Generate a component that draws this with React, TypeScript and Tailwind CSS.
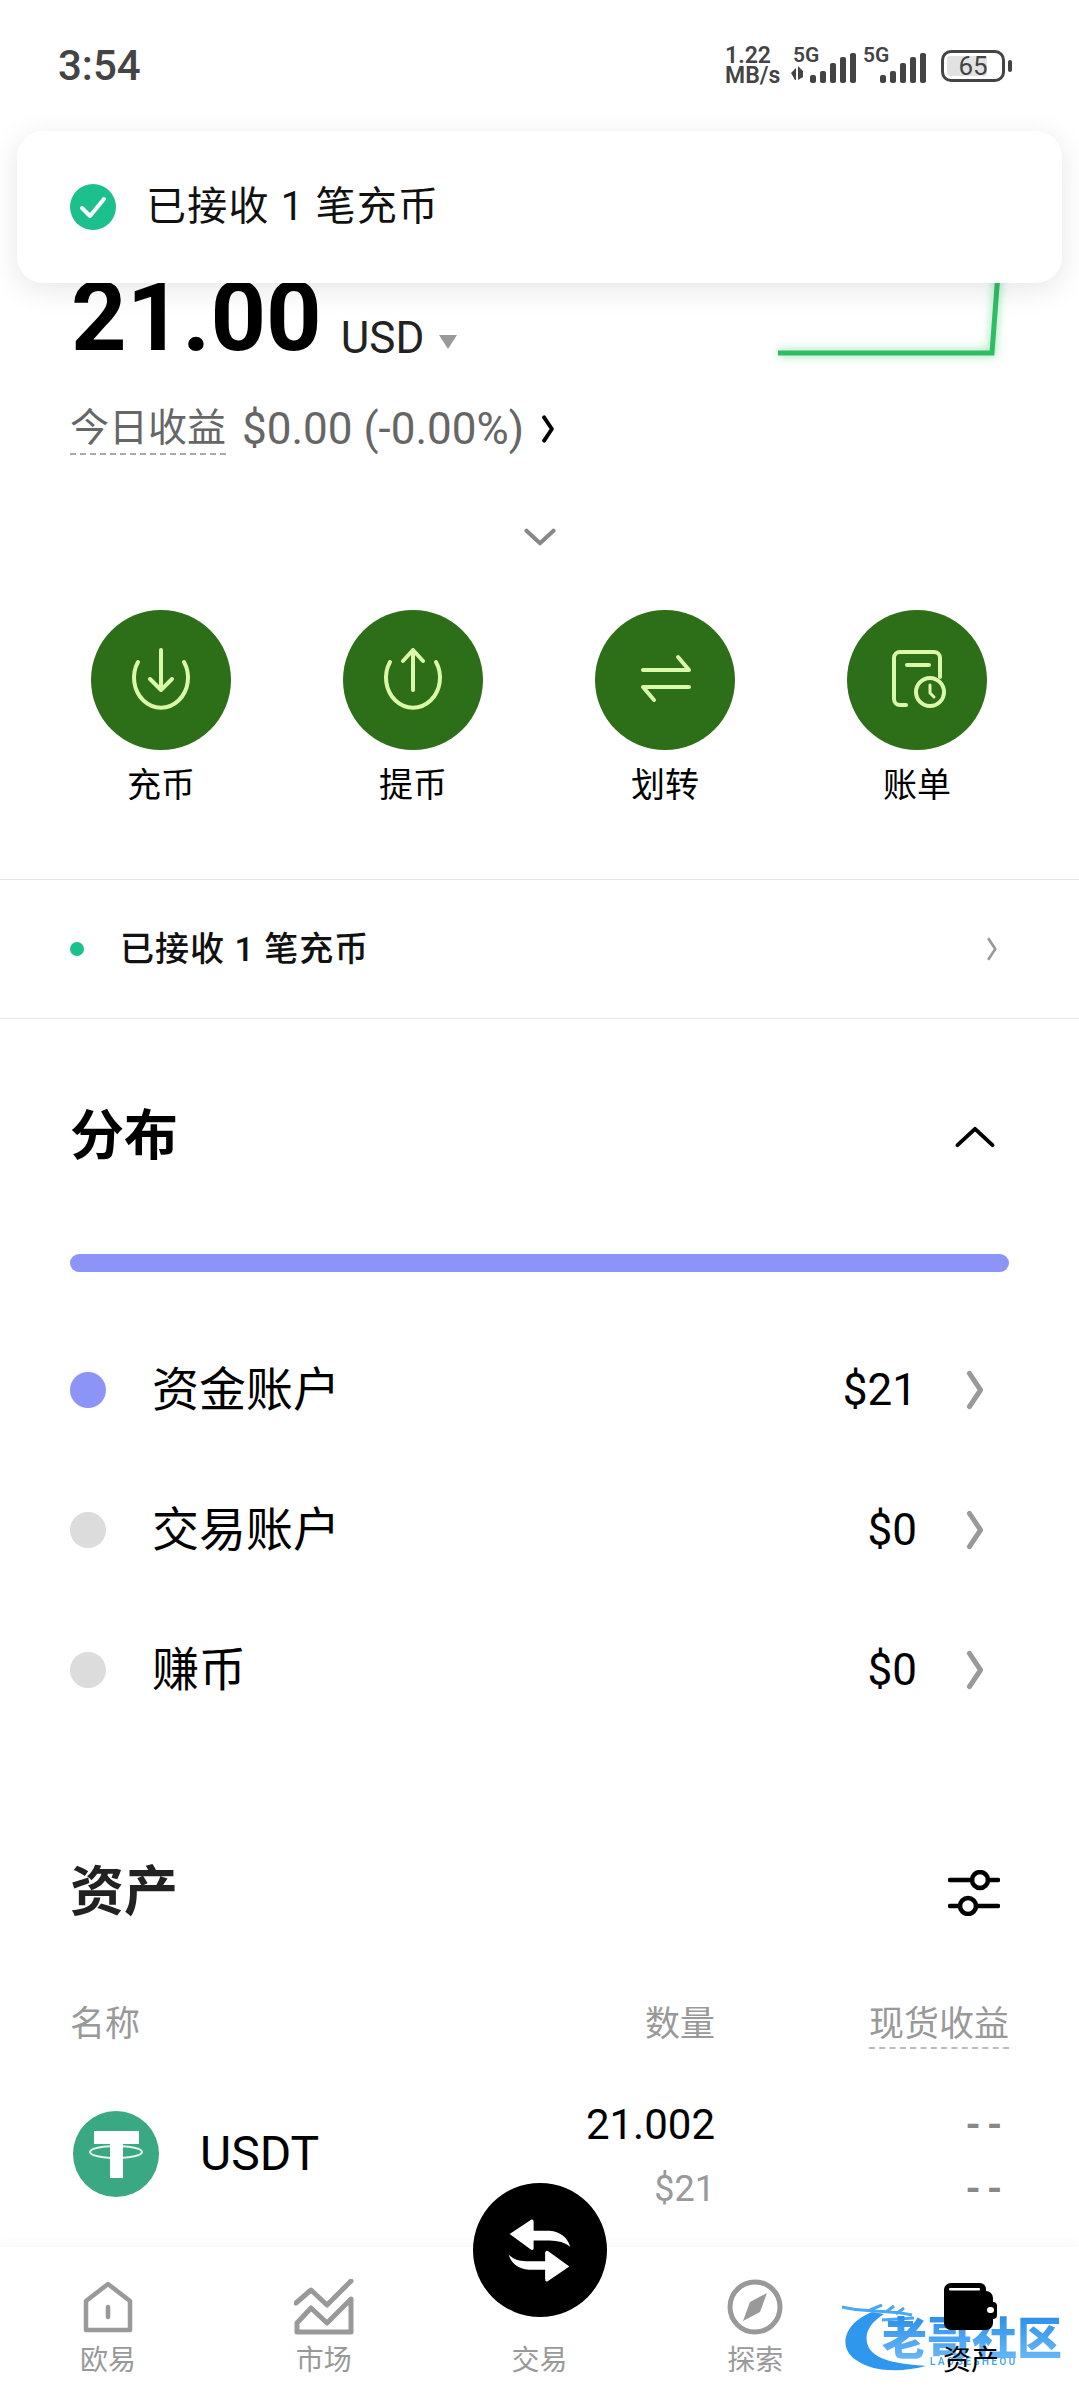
import type { ReactNode } from "react";

/* ------------------------------------------------------------------ */
/*  Icons                                                              */
/* ------------------------------------------------------------------ */

function Chevron({ className, dir = "right", weight = 4 }: { className?: string; dir?: "right" | "down" | "up"; weight?: number }) {
  const d = dir === "right" ? "M5 3l10 15-10 15" : dir === "down" ? "M3 3l15 14 15-14" : "M3 17l15-14 15 14";
  const box = dir === "right" ? "0 0 20 36" : "0 0 36 20";
  return (
    <svg viewBox={box} fill="none" stroke="currentColor" strokeWidth={weight} strokeLinecap="round" strokeLinejoin="round" className={className}>
      <path d={d} />
    </svg>
  );
}

function ActionIcon({ children }: { children: ReactNode }) {
  return (
    <svg width="64" height="64" viewBox="0 0 64 64" fill="none" stroke="#dcf9a9" strokeWidth="4" strokeLinecap="round" strokeLinejoin="round">
      {children}
    </svg>
  );
}

const actions: { label: string; icon: ReactNode }[] = [
  {
    label: "充币",
    icon: (
      <>
        <path d="M9 14A27 30 0 1 0 55 14" />
        <path d="M32 2V42M21 31L32 42L43 31" />
      </>
    ),
  },
  {
    label: "提币",
    icon: (
      <>
        <path d="M9 14A27 30 0 1 0 55 14" />
        <path d="M32 42V2M22 13L32 2L42 13" />
      </>
    ),
  },
  {
    label: "划转",
    icon: (
      <>
        <path d="M10 22H56L45 9" />
        <path d="M56 39H10L21 52" />
      </>
    ),
  },
  {
    label: "账单",
    icon: (
      <>
        <path d="M21 57H15a6 6 0 0 1-6-6V10a6 6 0 0 1 6-6H49a6 6 0 0 1 6 6V29" />
        <path d="M22 17H44" />
        <circle cx="45" cy="44" r="14" />
        <path d="M45 37V45L49 49" strokeWidth="3" />
      </>
    ),
  },
];

const barHeights = [8, 12, 20, 26, 30];

function SignalBars({ start, activity }: { start: number; activity?: boolean }) {
  return (
    <svg width="70" height="32" viewBox="0 0 70 32" fill="#444">
      {activity && <path d="M1 21l5-5v12l-1 0zM8 14l5 5v6l-5 3z" />}
      {barHeights.map((h, i) => (
        <rect key={i} x={start + i * 10} y={31 - h} width="6" height={h} rx="2" />
      ))}
    </svg>
  );
}

function HomeIcon() {
  return (
    <svg width="50" height="52" viewBox="0 0 50 52" fill="none" stroke="#999" strokeWidth="4.5" strokeLinejoin="round">
      <path d="M3 49V20L25 3L47 20V49Z" />
      <path d="M25 26V36" strokeLinecap="round" />
    </svg>
  );
}

function MarketIcon() {
  return (
    <svg width="60" height="56" viewBox="0 0 60 56" fill="none" stroke="#999" strokeWidth="5" strokeLinecap="round" strokeLinejoin="round">
      <path d="M2 24L17 11L33 26L57 2" />
      <path d="M57 20L33 44L17 29L3 44V53H57Z" />
    </svg>
  );
}

function CompassIcon() {
  return (
    <svg width="56" height="56" viewBox="0 0 56 56" fill="none">
      <circle cx="28" cy="28" r="25" stroke="#999" strokeWidth="5" />
      <path d="M40 14L33 33L16 42L23 23Z" fill="#999" />
    </svg>
  );
}

function WalletIcon() {
  return (
    <svg width="56" height="50" viewBox="0 0 56 50">
      <path d="M1 8a7 7 0 0 1 7-7H37a6 6 0 0 1 6 6V9H43a7 7 0 0 1 7 7V20a4 4 0 0 1 4 4V33a4 4 0 0 1-4 4V41a7 7 0 0 1-7 7H8a7 7 0 0 1-7-7Z" fill="#000" />
      <rect x="6" y="6" width="31" height="2.5" rx="1" fill="#fff" />
      <rect x="44" y="25" width="7" height="6" rx="3" fill="#fff" />
    </svg>
  );
}

function SwapIcon() {
  return (
    <svg width="140" height="140" viewBox="0 0 420 420" fill="#fff">
      <path d="M115 160L182 115Q190 112 190 122V150H240Q290 155 305 200Q280 180 240 180H190V205Q188 213 180 208Z" />
      <path d="M302 262L234 308Q226 311 226 300V272H175Q125 268 112 225Q135 248 175 245H226V218Q228 210 236 214Z" />
    </svg>
  );
}

function TetherLogo() {
  return (
    <svg width="86" height="86" viewBox="0 0 86 86">
      <circle cx="43" cy="43" r="43" fill="#3aa883" />
      <path d="M21 20H66V33H50V67H37V33H21Z" fill="#fff" />
      <ellipse cx="43" cy="41" rx="26" ry="6" fill="none" stroke="#fff" strokeWidth="2" opacity="0.85" />
    </svg>
  );
}

/* ------------------------------------------------------------------ */
/*  Data                                                               */
/* ------------------------------------------------------------------ */

const distribution = [
  { name: "资金账户", value: "$21", dot: "bg-[#8d94f8]" },
  { name: "交易账户", value: "$0", dot: "bg-[#dcdcdc]" },
  { name: "赚币", value: "$0", dot: "bg-[#dcdcdc]" },
];

const navItems: { label: string; icon: ReactNode | null; active?: boolean }[] = [
  { label: "欧易", icon: <HomeIcon /> },
  { label: "市场", icon: <MarketIcon /> },
  { label: "交易", icon: null },
  { label: "探索", icon: <CompassIcon /> },
  { label: "资产", icon: <WalletIcon />, active: true },
];

/* ------------------------------------------------------------------ */
/*  Sections                                                           */
/* ------------------------------------------------------------------ */

function StatusBar() {
  return (
    <div className="flex h-[130px] items-center justify-between pl-[58px] pr-[67px] pt-[1px] text-[#444]">
      <span className="text-[42px] font-medium leading-none">3:54</span>
      <div className="flex items-center">
        <div className="flex w-[65px] flex-col text-[23px] font-semibold leading-[20px]">
          <span>1.22</span>
          <span>MB/s</span>
        </div>
        <div className="relative h-[36px] w-[73px]">
          <span className="absolute -top-[3px] left-[3px] text-[21px] font-semibold leading-none">5G</span>
          <div className="absolute bottom-0 left-0">
            <SignalBars start={20} activity />
          </div>
        </div>
        <div className="relative h-[36px] w-[78px]">
          <span className="absolute -top-[3px] left-0 text-[21px] font-semibold leading-none">5G</span>
          <div className="absolute bottom-0 left-0">
            <SignalBars start={17} />
          </div>
        </div>
        <div className="flex items-center">
          <div className="relative flex h-[32px] w-[64px] items-center justify-center rounded-[10px] border-[3px] border-[#444] text-[26px] leading-none">
            <div className="absolute inset-y-[3px] left-[3px] w-[40px] rounded-[3px] bg-[#e2e2e2]" />
            <span className="relative">65</span>
          </div>
          <div className="ml-[3px] h-[12px] w-[4px] rounded-full bg-[#444]" />
        </div>
      </div>
    </div>
  );
}

function Balance() {
  return (
    <>
      <div className="mt-[137px] flex h-[100px] items-end justify-between pl-[71px] pr-[73px]">
        <div className="flex items-baseline">
          <span className="text-[97px] font-bold leading-[100px] text-black">21.00</span>
          <span className="ml-[19px] translate-y-[3px] text-[44px] leading-none text-[#222]">USD</span>
          <svg width="20" height="16" viewBox="0 0 20 16" className="ml-[14px]" fill="#9a9a9a">
            <path d="M1 1H19L10 15Z" />
          </svg>
        </div>
        <svg width="230" height="90" viewBox="0 0 230 90" fill="none" className="mb-[8px] drop-shadow-[0_0_5px_rgba(34,197,94,0.6)]">
          <path d="M2 84H216L222 4" stroke="#2fbd63" strokeWidth="5" />
        </svg>
      </div>
      <div className="mt-[32px] flex h-[60px] items-center pl-[70px] text-[#666]">
        <span className="border-b-2 border-dashed border-[#aaa] text-[39px] leading-[50px]">今日收益</span>
        <span className="ml-[16px] text-[44px] leading-[50px]">$0.00 (-0.00%)</span>
        <Chevron weight={5} className="ml-[16px] h-[28px] w-[16px] text-black" />
      </div>
      <div className="mt-[63px] flex h-[30px] items-center justify-center">
        <Chevron dir="down" weight={4.5} className="h-[18px] w-[34px] text-[#888]" />
      </div>
    </>
  );
}

function Actions() {
  return (
    <div className="mt-[58px] grid grid-cols-4 gap-x-[112px] pl-[91px] pr-[92px]">
      {actions.map((a) => (
        <div key={a.label} className="flex flex-col items-center">
          <div className="flex h-[140px] w-[140px] items-center justify-center rounded-full bg-[#2d6e18]">
            <ActionIcon>{a.icon}</ActionIcon>
          </div>
          <span className="mt-[12px] text-[34px] leading-[46px] text-black">{a.label}</span>
        </div>
      ))}
    </div>
  );
}

function NoticeRow() {
  return (
    <div className="mt-[71px] flex h-[140px] items-center border-y border-[#e6e6e6] pl-[70px] pr-[80px]">
      <div className="h-[14px] w-[14px] rounded-full bg-[#1cc08c]" />
      <span className="ml-[36px] text-[34px] font-medium tracking-[1px] text-[#111]">已接收 1 笔充币</span>
      <Chevron className="ml-auto h-[24px] w-[14px] text-[#999]" />
    </div>
  );
}

function Distribution() {
  return (
    <section className="px-[70px]">
      <div className="mt-[88px] flex h-[60px] items-center justify-between">
        <h2 className="text-[54px] font-bold leading-none text-black">分布</h2>
        <Chevron dir="up" weight={3.4} className="mr-[13px] h-[24px] w-[42px] text-black" />
      </div>
      <div className="mt-[87px] h-[18px] w-[939px] rounded-full bg-[#8d94f8]" />
      <div className="mt-[48px]">
        {distribution.map((row) => (
          <div key={row.name} className="flex h-[140px] items-center">
            <div className={`h-[36px] w-[36px] rounded-full ${row.dot}`} />
            <span className="ml-[46px] text-[47px] text-black">{row.name}</span>
            <span className="ml-auto text-[44px] text-black">{row.value}</span>
            <Chevron weight={4.5} className="ml-[46px] mr-[22px] h-[40px] w-[24px] text-[#999]" />
          </div>
        ))}
      </div>
    </section>
  );
}

function Assets() {
  return (
    <section className="px-[70px]">
      <div className="mt-[123px] flex h-[60px] items-center justify-between">
        <h2 className="text-[54px] font-bold leading-none text-[#222]">资产</h2>
        <svg width="52" height="46" viewBox="0 0 52 46" fill="none" stroke="#000" strokeWidth="4.5" strokeLinecap="round" className="mr-[9px]">
          <path d="M2 10H24M40 10H50M2 36H12M28 36H50" />
          <circle cx="32" cy="10" r="8" />
          <circle cx="20" cy="36" r="8" />
        </svg>
      </div>
      <div className="mt-[80px] flex h-[46px] items-start text-[35px] leading-[44px] text-[#999]">
        <span className="flex-1">名称</span>
        <span className="w-[200px] text-right">数量</span>
        <div className="flex w-[294px] justify-end">
          <span className="border-b-2 border-dashed border-[#bbb]">现货收益</span>
        </div>
      </div>
      <div className="mt-[53px] flex h-[110px] items-center">
        <div className="flex flex-1 items-center pb-[6px] pl-[3px]">
          <TetherLogo />
          <span className="ml-[41px] text-[48px] text-black">USDT</span>
        </div>
        <div className="flex w-[200px] flex-col items-end gap-[14px]">
          <span className="text-[42px] leading-[50px] text-black">21.002</span>
          <span className="text-[36px] leading-[50px] text-[#999]">$21</span>
        </div>
        <div className="flex w-[294px] flex-col items-end gap-[14px] text-[40px] font-semibold leading-[50px] tracking-[7px] text-[#888]">
          <span>--</span>
          <span>--</span>
        </div>
      </div>
    </section>
  );
}

/* community stamp laid across the bottom right corner */
function Stamp() {
  return (
    <div className="absolute bottom-[28px] right-[17px] h-[68px] w-[220px] blur-[0.6px]">
      <svg width="110" height="68" viewBox="0 0 110 68" fill="none" className="absolute left-0 top-0">
        <path d="M30 8C4 18 -6 42 14 56C32 69 62 68 84 62C60 60 36 58 27 44C21 32 26 20 42 10Z" fill="#2f97ee" />
        <path d="M0 3C20 9 44 5 70 11M28 6L40 1M44 8L52 2M54 10L62 4M40 16L72 14M52 20L70 20" stroke="#4aa8f2" strokeWidth="3" />
      </svg>
      <span className="absolute left-[40px] top-[12px] bg-linear-to-b from-[#2b8fea] to-[#6ebcf8] bg-clip-text text-[45px] font-black leading-[48px] text-transparent">
        老哥社区
      </span>
      <span className="absolute left-[88px] top-[53px] text-[10px] font-semibold leading-none tracking-[2.4px] text-[#4aa8f2]">
        LAOGESHEOU
      </span>
    </div>
  );
}

function BottomNav() {
  return (
    <nav className="absolute inset-x-0 bottom-0 h-[153px] bg-white shadow-[0_-4px_10px_rgba(0,0,0,0.03)]">
      <Stamp />
      <div className="absolute left-1/2 top-[-64px] flex h-[134px] w-[134px] -translate-x-1/2 items-center justify-center rounded-full bg-black">
        <SwapIcon />
      </div>
      <div className="relative grid grid-cols-5 pt-[31px]">
        {navItems.map((item) => (
          <div key={item.label} className="flex flex-col items-center">
            <div className="flex h-[58px] items-center justify-center">{item.icon}</div>
            <span className={`mt-[5px] text-[28px] leading-[40px] ${item.active ? "text-black" : "text-[#999]"}`}>
              {item.label}
            </span>
          </div>
        ))}
      </div>
    </nav>
  );
}

/* ------------------------------------------------------------------ */
/*  Page                                                               */
/* ------------------------------------------------------------------ */

export default function App() {
  return (
    <div className="relative h-[2400px] w-[1079px] overflow-hidden bg-white font-['Roboto','Noto_Sans_CJK_SC',sans-serif]">
      <StatusBar />
      <Balance />
      <Actions />
      <NoticeRow />
      <Distribution />
      <Assets />
      <BottomNav />

      {/* deposit toast */}
      <div className="absolute left-[17px] top-[131px] flex h-[152px] w-[1045px] items-center rounded-[26px] bg-white pl-[53px] shadow-[0_6px_30px_rgba(0,0,0,0.1)]">
        <svg width="46" height="46" viewBox="0 0 46 46">
          <circle cx="23" cy="23" r="23" fill="#1cc08c" />
          <path d="M12 24L20 32L34 15" fill="none" stroke="#fff" strokeWidth="4" strokeLinecap="round" strokeLinejoin="round" />
        </svg>
        <span className="ml-[30px] text-[40px] tracking-[1.2px] text-[#111]">已接收 1 笔充币</span>
      </div>
    </div>
  );
}
